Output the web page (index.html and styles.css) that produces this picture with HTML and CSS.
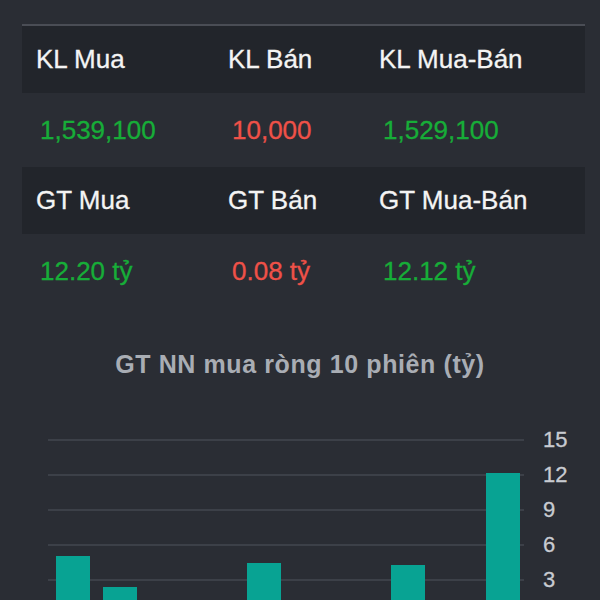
FILE: index.html
```html
<!DOCTYPE html>
<html lang="vi">
<head>
    <meta charset="UTF-8">
    <meta name="viewport" content="width=device-width, initial-scale=1.0">
    <title>Giao dịch NN</title>
    <link rel="stylesheet" href="styles.css">
</head>
<body>
    <div class="panel">
        <div class="stats">
            <div class="row head">
                <div class="cell">KL Mua</div>
                <div class="cell">KL Bán</div>
                <div class="cell">KL Mua-Bán</div>
            </div>
            <div class="row vals">
                <div class="cell up">1,539,100</div>
                <div class="cell down">10,000</div>
                <div class="cell up">1,529,100</div>
            </div>
            <div class="row head">
                <div class="cell">GT Mua</div>
                <div class="cell">GT Bán</div>
                <div class="cell">GT Mua-Bán</div>
            </div>
            <div class="row vals">
                <div class="cell up">12.20 tỷ</div>
                <div class="cell down">0.08 tỷ</div>
                <div class="cell up">12.12 tỷ</div>
            </div>
        </div>

        <!-- biểu đồ mua ròng -->
        <div class="chart">
            <h3 class="chart-title">GT NN mua ròng 10 phiên (tỷ)</h3>
            <svg class="chart-svg" width="600" height="223" viewBox="0 0 600 223">
                <g class="grid">
                    <line x1="48" y1="62" x2="524" y2="62"/>
                    <line x1="48" y1="97" x2="524" y2="97"/>
                    <line x1="48" y1="132" x2="524" y2="132"/>
                    <line x1="48" y1="167" x2="524" y2="167"/>
                    <line x1="48" y1="202" x2="524" y2="202"/>
                </g>
                <g class="axis">
                    <text x="543" y="69">15</text>
                    <text x="543" y="104">12</text>
                    <text x="543" y="139">9</text>
                    <text x="543" y="174">6</text>
                    <text x="543" y="209">3</text>
                </g>
                <g class="bars">
                    <rect x="56" y="178" width="34" height="59"/>
                    <rect x="103" y="209" width="34" height="28"/>
                    <rect x="247" y="185" width="34" height="52"/>
                    <rect x="391" y="187" width="34" height="50"/>
                    <rect x="486" y="95" width="34" height="142"/>
                </g>
            </svg>
        </div>
    </div>
</body>
</html>
```

FILE: styles.css
```css
body {
    margin: 0;
    padding: 0;
    background-color: #2a2d34;
    font-family: "Liberation Sans", Arial, sans-serif;
    overflow: hidden;
}
.panel {
    padding: 24px 15px 0 22px;
}
.stats {
    border-top: 2px solid #4a4d55;
}
.row {
    display: grid;
    grid-template-columns: 192px 151px 1fr;
    align-items: center;
}
.row.head {
    background-color: #22252b;
    height: 67px;
    color: #f4f4f4;
    font-size: 26px;
    -webkit-text-stroke: 0.3px #f4f4f4;
}
.row.head .cell {
    padding-left: 14px;
}
.row.vals {
    height: 74px;
    font-size: 26px;
}
.row.vals .cell {
    padding-left: 18px;
}
.up {
    color: #17ad38;
    -webkit-text-stroke: 0.3px #17ad38;
}
.down {
    color: #ef5148;
    -webkit-text-stroke: 0.3px #ef5148;
}

/* biểu đồ */
.chart {
    margin-left: -22px;
    margin-right: -15px;
    padding-top: 44px;
}
.chart-title {
    margin: 0 0 2px;
    text-align: center;
    font-size: 25px;
    line-height: 24px;
    letter-spacing: 0.6px;
    font-weight: bold;
    color: #a9adb4;
}
.chart-svg {
    display: block;
}
.grid line {
    stroke: #3c4048;
    stroke-width: 2;
}
.axis text {
    fill: #c8cbd1;
    stroke: #c8cbd1;
    stroke-width: 0.3px;
    font-size: 22px;
    font-family: "Liberation Sans", Arial, sans-serif;
}
.bars rect {
    fill: #08a393;
}
```
